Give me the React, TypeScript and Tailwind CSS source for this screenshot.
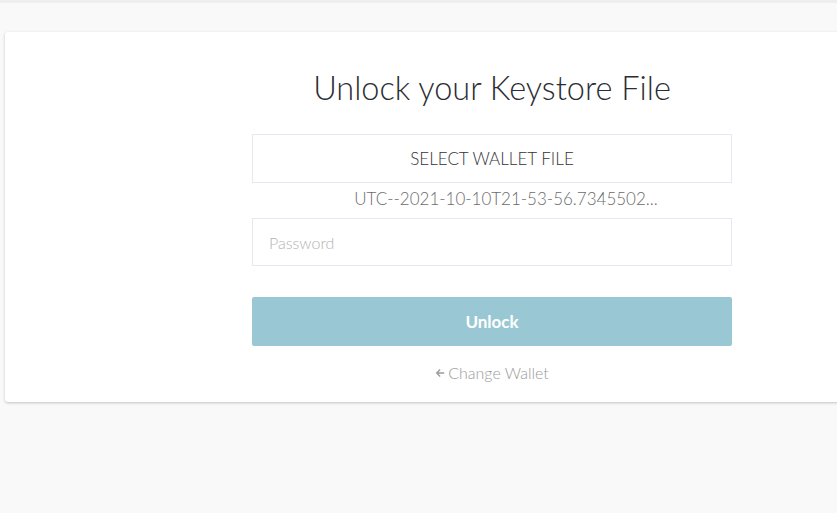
import { useState } from 'react'
import type { ChangeEvent } from 'react'

export default function App() {
  const [password, setPassword] = useState('')
  const fileName = 'UTC--2021-10-10T21-53-56.7345502...'

  const handleChange = (e: ChangeEvent<HTMLInputElement>) => setPassword(e.target.value)

  return (
    <div
      className="min-h-[513px] w-full overflow-hidden bg-[#f9f9f9]"
      style={{ fontFamily: 'Lato, "Open Sans", sans-serif' }}
    >
      <div className="h-[3px] w-full bg-[#eeeeee]" />

      <div className="ml-[5px] mt-[29px] w-[974px] rounded-[3px] bg-white pb-[17px] pt-[36px] shadow-[0_1px_3px_rgba(0,0,0,0.22)]">
        <div className="mx-auto flex w-[480px] flex-col items-center">
          <h1 className="text-[32.5px] font-light leading-[40px] text-[#2b2d33]">Unlock your Keystore File</h1>

          <button
            type="button"
            className="mt-[26px] h-[49px] w-full border border-[#e4e8f1] bg-white text-[17px] font-light text-[#333]"
          >
            SELECT WALLET FILE
          </button>

          {/* file name sits a bit right of centre */}
          <p className="mt-[5px] pl-[28px] text-[17px] font-light leading-[22px] text-[#6b6b6b]">{fileName}</p>

          <input
            type="password"
            name="password"
            placeholder="Password"
            value={password}
            onChange={handleChange}
            className="mt-[8px] h-[48px] w-full border border-[#e4e8f1] px-[16px] text-[16px] font-light text-[#333] outline-none placeholder:text-[#b3b3b3]"
          />

          <button
            type="button"
            className="mt-[31px] h-[49px] w-full rounded-[2px] bg-[#99c8d4] text-[17px] font-bold text-white"
          >
            Unlock
          </button>

          <a href="#" className="mt-[15px] flex items-center gap-[3px] text-[16px] font-light leading-[24px] text-[#9a9a9a]">
            <svg width="10" height="10" viewBox="0 0 10 10" fill="#9a9a9a">
              <path d="M4.6 1 0.8 5 4.6 9 5.6 8 3.4 5.7H9.2V4.3H3.4L5.6 2Z" />
            </svg>
            Change Wallet
          </a>
        </div>
      </div>
    </div>
  )
}
